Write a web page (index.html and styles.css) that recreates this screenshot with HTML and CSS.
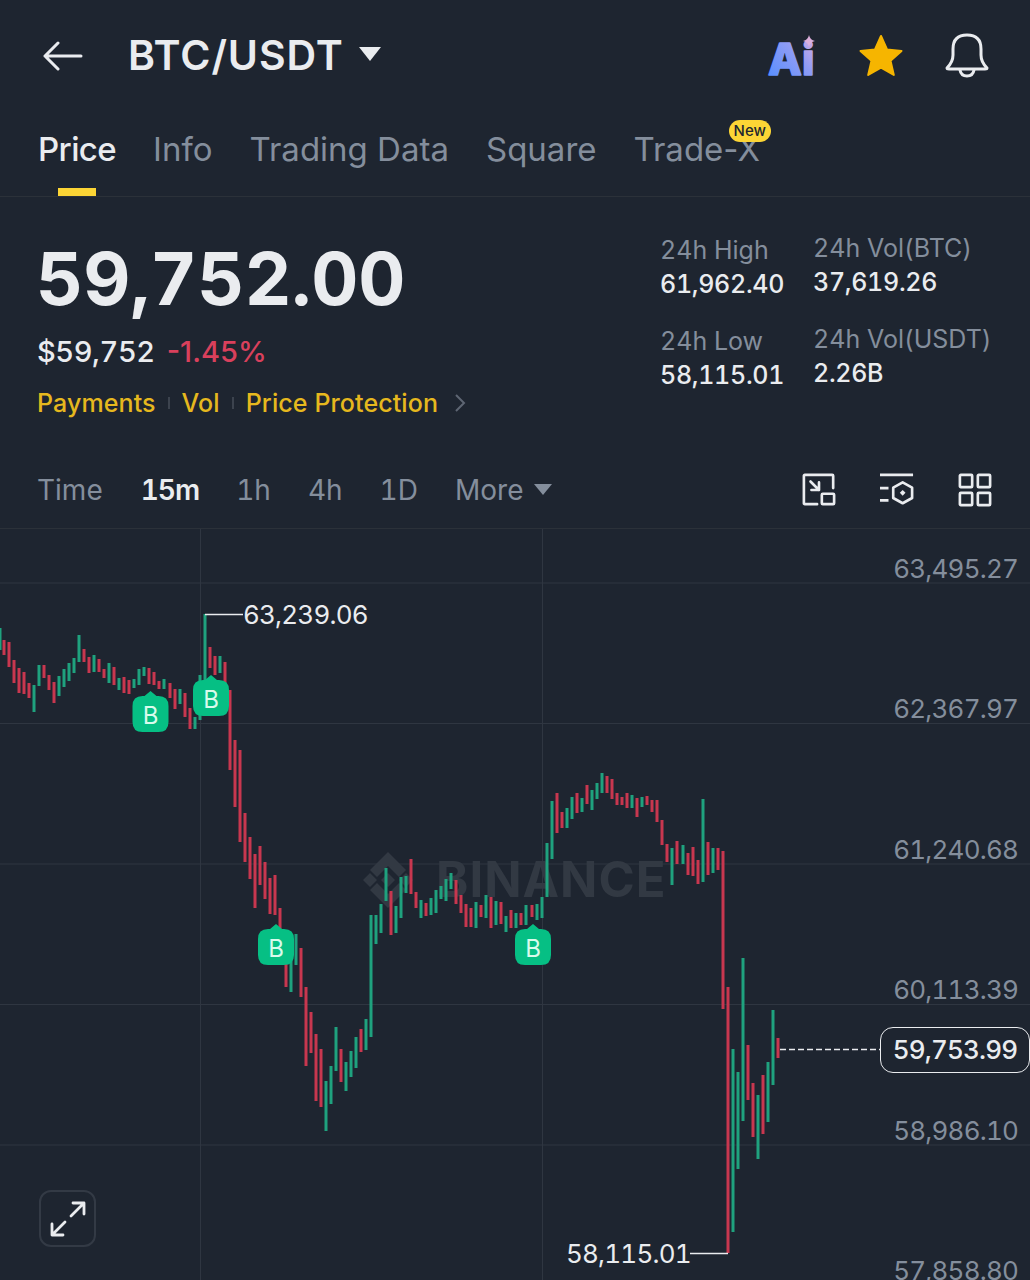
FILE: index.html
```html
<!DOCTYPE HTML>
<html lang="en">
  <head>
    <meta charset="utf-8">
    <title>BTC/USDT</title>
    <link rel="stylesheet" href="styles.css">
  </head>
  <body>
    <div class="app">
      <header class="topbar">
        <svg class="back" width="40" height="32" viewBox="0 0 40 32" fill="none" stroke="#eaecef" stroke-width="3" stroke-linecap="round" stroke-linejoin="round"><path d="M2 16H38M15 3L2 16L15 29"/></svg>
        <h1 class="pair">BTC/USDT</h1>
        <span class="caret caret-big"></span>
        <div class="top-icons">
          <svg class="ai" width="56" height="60" viewBox="0 0 56 60">
            <defs>
              <linearGradient id="aiGrad" x1="0" y1="1" x2="1" y2="0">
                <stop offset="0" stop-color="#4f8dff"/>
                <stop offset="0.6" stop-color="#8f9cf5"/>
                <stop offset="1" stop-color="#e3b0e0"/>
              </linearGradient>
            </defs>
            <text x="1" y="49" class="ai-text" fill="url(#aiGrad)" stroke="url(#aiGrad)">Ai</text>
            <path d="M42 9Q43 14 48 15Q43 16 42 21Q41 16 36 15Q41 14 42 9Z" fill="#dcb0dc"/>
          </svg>
          <svg class="star" width="46" height="44" viewBox="0 0 46 44"><path d="M23 2L29 15.5L43.5 17L32.5 26.8L35.8 41L23 33.6L10.2 41L13.5 26.8L2.500 17L17 15.500Z" fill="#f6b500" stroke="#f6b500" stroke-width="2" stroke-linejoin="round"/></svg>
          <svg class="bell" width="44" height="46" viewBox="0 0 44 46" fill="none" stroke="#eaecef" stroke-width="3" stroke-linecap="round" stroke-linejoin="round"><path d="M2 35Q8 29 8 22V16Q8 2 22 2Q36 2 36 16V22Q36 29 42 35Q42 36 40 36H4Q2 36 2 35Z"/><path d="M15 37Q16 43 22 43Q28 43 29 37"/></svg>
        </div>
      </header>

      <nav class="tabs">
        <a class="tab active">Price</a>
        <a class="tab">Info</a>
        <a class="tab">Trading Data</a>
        <a class="tab">Square</a>
        <a class="tab tab-new">Trade-X<span class="new">New</span></a>
      </nav>

      <section class="summary">
        <div class="quote">
          <div class="last">59,752.00</div>
          <div class="sub"><span class="usd">$59,752</span><span class="change">-1.45%</span></div>
          <div class="links">
            <span>Payments</span><i></i><span>Vol</span><i></i><span>Price Protection</span>
            <svg width="12" height="20" viewBox="0 0 12 20" fill="none" stroke="#5e6673" stroke-width="2"><path d="M2 2L10 10L2 18"/></svg>
          </div>
        </div>
        <div class="stats">
          <div class="stat"><label>24h High</label><b>61,962.40</b></div>
          <div class="stat stat-r"><label>24h Vol(BTC)</label><b>37,619.26</b></div>
          <div class="stat"><label>24h Low</label><b>58,115.01</b></div>
          <div class="stat stat-r"><label>24h Vol(USDT)</label><b>2.26B</b></div>
        </div>
      </section>

      <div class="intervals">
        <span class="iv iv-time">Time</span>
        <span class="iv iv-on">15m</span>
        <span class="iv">1h</span>
        <span class="iv">4h</span>
        <span class="iv">1D</span>
        <span class="iv iv-more">More<span class="caret caret-gray"></span></span>
        <div class="tools">
          <svg width="34" height="34" viewBox="0 0 36 36" fill="none" stroke="#eaecef" stroke-width="2.800" stroke-linejoin="round" stroke-linecap="round"><path d="M16 33H3Q2 33 2 32V3Q2 2 3 2H32Q33 2 33 3V16"/><path d="M9 9L18 18M18 10V18H10"/><rect x="21" y="22" width="13" height="11" rx="1"/></svg>
          <svg width="36" height="34" viewBox="0 0 38 36" fill="none" stroke="#eaecef" stroke-width="2.800" stroke-linejoin="round"><path d="M1 2H36M1 16H10M1 29H10"/><path d="M25 10L35 15.500V26.500L25 32L15 26.500V15.500Z"/><path d="M25 18L28 21L25 24L22 21Z" fill="#eaecef" stroke="none"/></svg>
          <svg width="34" height="34" viewBox="0 0 36 36" fill="none" stroke="#eaecef" stroke-width="2.800" stroke-linejoin="round"><rect x="2" y="2" width="13" height="13" rx="1"/><rect x="21" y="2" width="13" height="13" rx="1"/><rect x="2" y="21" width="13" height="13" rx="1"/><rect x="21" y="21" width="13" height="13" rx="1"/></svg>
        </div>
      </div>

      <section class="chart">
        <svg class="plot" width="1030" height="751" viewBox="0 529 1030 751">
          <!-- grid -->
          <path class="grid" d="M0 583H1030M0 723.500H1030M0 864H1030M0 1004.500H1030M0 1145H1030M200.500 529V1280M542.500 529V1280"/>
          <!-- watermark -->
          <g class="mark">
            <path d="M388 852L406 870L399 877L388 866L377 877L370 870ZM388 908L406 890L399 883L388 894L377 883L370 890ZM388 873L395 880L388 887L381 880ZM370 873L377 880L370 887L363 880ZM406 873L413 880L406 887L399 880Z"/>
            <text x="436" y="897" class="mark-text">BINANCE</text>
          </g>
          <!-- candles -->
          <path class="red" d="M4 640V655M9 642V667M14 660V683M19 668V693M24 672V694M29 683V698M44 665V678M49 675V690M54 682V703M84 649V662M89 657V673M99 659V672M104 669V678M114 667V685M124 677V693M129 680V694M149 668V684M154 672V685M159 681V689M170 683V698M175 689V709M185 693V717M190 708V729M210 647V668M215 656V675M225 662V683M230 690V770M235 740V807M240 750V842M245 813V862M250 837V879M255 854V908M260 846V885M265 862V899M270 878V914M275 875V915M280 908V933M286 930V987M301 948V997M306 987V1066M311 1012V1053M316 1034V1101M321 1049V1107M341 1049V1082M361 1029V1052M391 891V935M411 859V894M416 892V908M426 903V916M456 880V904M461 895V913M466 904V927M471 908V927M481 905V917M491 897V928M501 902V924M511 910V928M521 913V925M532 905V917M557 793V833M562 812V828M577 793V813M587 785V804M607 776V793M612 779V799M617 793V805M622 797V805M627 793V808M637 798V817M647 796V805M652 800V812M657 800V822M662 820V845M667 844V862M677 841V864M688 853V875M693 847V876M698 860V884M708 842V875M718 848V870M723 851V1009M728 987V1253M748 1045V1100M753 1083V1137M763 1075V1134M778 1038V1058"/>
          <path class="green" d="M0 628V650M34 685V712M39 665V686M59 676V696M64 669V687M69 663V681M74 658V673M79 635V662M94 655V672M109 663V683M119 678V690M134 679V688M139 669V685M144 667V676M164 679V689M180 689V704M195 717V729M200 675V720M205 614V680M220 656V673M291 935V992M296 934V965M326 1081V1131M331 1066V1104M336 1027V1071M346 1062V1091M351 1051V1077M356 1037V1068M366 1019V1050M371 915V1037M376 915V944M381 904V933M386 868V901M396 906V933M401 877V918M406 876V893M421 900V918M431 898V915M436 890V913M441 886V899M446 879V901M451 873V889M476 902V928M486 895V918M496 901V925M506 916V932M516 913V928M526 905V925M537 904V920M542 897V918M547 843V897M552 801V859M567 808V828M572 797V819M582 798V812M592 790V810M597 783V799M602 773V793M632 795V808M642 797V807M672 848V885M683 845V864M703 799V882M713 848V873M733 1049V1232M738 1072V1169M743 958V1121M758 1095V1159M768 1062V1122M773 1010V1085"/>
          <!-- high / low leaders -->
          <path class="leader" d="M205 614.500H243M690 1253.500H728"/>
          <path class="dash" d="M780 1049.500H880"/>
          <!-- buy markers -->
          <g class="buy">
            <g transform="translate(150.500 691)"><path d="M0 0L6 5H8Q18 5 18 15V31Q18 41 8 41H-8Q-18 41 -18 31V15Q-18 5 -8 5H-6Z"/><text y="33">B</text></g>
            <g transform="translate(211 675)"><path d="M0 0L6 5H8Q18 5 18 15V31Q18 41 8 41H-8Q-18 41 -18 31V15Q-18 5 -8 5H-6Z"/><text y="33">B</text></g>
            <g transform="translate(276 924)"><path d="M0 0L6 5H8Q18 5 18 15V31Q18 41 8 41H-8Q-18 41 -18 31V15Q-18 5 -8 5H-6Z"/><text y="33">B</text></g>
            <g transform="translate(533 924)"><path d="M0 0L6 5H8Q18 5 18 15V31Q18 41 8 41H-8Q-18 41 -18 31V15Q-18 5 -8 5H-6Z"/><text y="33">B</text></g>
          </g>
        </svg>

        <div class="axis">
          <span>63,495.27</span>
          <span>62,367.97</span>
          <span>61,240.68</span>
          <span>60,113.39</span>
          <span>58,986.10</span>
          <span>57,858.80</span>
        </div>
        <span class="tag-high">63,239.06</span>
        <span class="tag-low">58,115.01</span>
        <span class="tag-now">59,753.99</span>
        <div class="expand">
          <svg width="36" height="36" viewBox="0 0 36 36" fill="none" stroke="#eaecef" stroke-width="2.800" stroke-linecap="round" stroke-linejoin="round"><path d="M21 15L34 2M23 2H34V13M15 21L2 34M2 23V34H13"/></svg>
        </div>
      </section>
    </div>
  </body>
</html>
```

FILE: styles.css
```css
html {
  font-size: 100%;
  font-family: Inter, "Liberation Sans", sans-serif;
  font-variant-numeric: tabular-nums; }

* {
  margin: 0;
  padding: 0;
  box-sizing: border-box; }

body {
  background: #1e2530;
  color: #eaecef;
  width: 1030px;
  height: 1280px;
  overflow: hidden; }

.app {
  width: 1030px;
  height: 1280px;
  display: flex;
  flex-direction: column; }

/* top bar */
.topbar {
  height: 112px;
  display: flex;
  align-items: center;
  padding: 0 41px 0 43px; }

.back {
  margin-right: 45px; }

.pair {
  font-size: 41px;
  font-weight: 600;
  letter-spacing: 0.9px;
  line-height: 1;
  margin-top: -2px;
  font-variant-numeric: normal; }

.caret {
  display: inline-block;
  width: 0;
  height: 0;
  border-left: 11px solid transparent;
  border-right: 11px solid transparent;
  border-top: 14px solid #eaecef; }

.caret-big {
  margin-left: 15px;
  margin-top: -4px; }

.caret-gray {
  border-left-width: 9px;
  border-right-width: 9px;
  border-top: 11px solid #848e9c;
  margin-left: 11px;
  vertical-align: 5px; }

.top-icons {
  margin-left: auto;
  display: flex;
  align-items: center;
  gap: 41px; }

.ai {
  margin-right: -6px; }

.ai-text {
  font-size: 44px;
  font-weight: 800;
  stroke-width: 1.5;
  stroke-linejoin: round; }

/* tabs */
.tabs {
  height: 85px;
  display: flex;
  gap: 37px;
  padding: 0 0 0 38px;
  border-bottom: 1px solid #2b3139;
  font-variant-numeric: normal; }

.tab {
  position: relative;
  font-size: 33px;
  font-weight: 400;
  line-height: 74px;
  color: #848e9c; }

.active {
  color: #eaecef;
  font-weight: 500;
  letter-spacing: -0.6px; }

.active:after {
  content: "";
  position: absolute;
  left: 20px;
  bottom: 0;
  width: 38px;
  height: 8px;
  background: #fcd535; }

.new {
  position: absolute;
  top: 8px;
  right: -11px;
  height: 22px;
  padding: 0 5px;
  border-radius: 11px;
  background: #fcd535;
  color: #202630;
  font-size: 15px;
  font-weight: 500;
  line-height: 22px; }

/* price summary */
.summary {
  height: 252px;
  display: flex;
  justify-content: space-between;
  padding: 0 39px 0 38px; }

.last {
  font-size: 73px;
  font-weight: 700;
  line-height: 80px;
  margin-top: 42px;
  margin-left: -2px; }

.sub {
  display: flex;
  gap: 12px;
  margin-top: 16px;
  margin-left: -1px;
  font-size: 29px;
  font-weight: 500;
  line-height: 34px; }

.usd {
  letter-spacing: -0.4px; }

.change {
  color: #d9405c;
  font-variant-numeric: normal; }

.links {
  display: flex;
  align-items: center;
  margin-top: 17px;
  margin-left: -1px;
  font-size: 25px;
  font-weight: 500;
  line-height: 34px;
  letter-spacing: 0.1px;
  color: #e6b81e; }

.links i {
  width: 2px;
  height: 12px;
  margin: 0 12px;
  background: #3c434e; }

.links svg {
  margin-left: 16px; }

.stats {
  display: grid;
  grid-template-columns: 153px 178px;
  row-gap: 23px;
  margin-top: 36px;
  align-content: start; }

.stat label {
  display: block;
  font-size: 25px;
  line-height: 34px;
  color: #848e9c;
  white-space: nowrap; }

.stat b {
  display: block;
  font-size: 25px;
  font-weight: 500;
  line-height: 34px;
  letter-spacing: -0.3px; }

.stat-r {
  margin-top: -2px; }

/* interval row */
.intervals {
  height: 80px;
  display: flex;
  align-items: center;
  padding: 2px 38px 0;
  border-bottom: 1px solid #2b3139;
  font-size: 28px;
  color: #848e9c; }

.iv {
  margin-right: 37px; }

.iv-time {
  margin-left: -1px;
  margin-right: 38px; }

.iv-on {
  color: #eaecef;
  font-weight: 600;
  letter-spacing: -1px; }

.tools {
  margin-left: auto;
  display: flex;
  gap: 43px;
  align-items: center; }

/* chart */
.chart {
  position: relative;
  flex: 1;
  overflow: hidden; }

.plot {
  display: block; }

.grid {
  stroke: #2f3641;
  stroke-width: 1;
  fill: none; }

.mark {
  fill: #323943; }

.mark-text {
  font-size: 49px;
  font-weight: 700;
  letter-spacing: 1px; }

.red, .green {
  fill: none;
  stroke-width: 3; }

.red {
  stroke: #c8374f; }

.green {
  stroke: #1fa27e; }

.leader {
  stroke: #eaecef;
  stroke-width: 1.500;
  fill: none; }

.dash {
  stroke: #eaecef;
  stroke-width: 1.500;
  stroke-dasharray: 6 3;
  fill: none; }

.buy path {
  fill: #06bf84; }

.buy text {
  fill: #d8fbec;
  font-size: 24px;
  text-anchor: middle; }

.axis {
  position: absolute;
  top: 23px;
  right: 12px;
  height: 736px;
  display: flex;
  flex-direction: column;
  justify-content: space-between;
  align-items: flex-end;
  font-size: 26px;
  line-height: 34px;
  letter-spacing: -0.8px;
  color: #848e9c; }

.tag-high, .tag-low {
  position: absolute;
  font-size: 26px;
  line-height: 34px;
  letter-spacing: -0.8px;
  color: #eaecef; }

.tag-high {
  left: 243px;
  top: 69px; }

.tag-low {
  left: 566px;
  top: 708px; }

.tag-now {
  position: absolute;
  left: 880px;
  top: 498px;
  width: 150px;
  height: 46px;
  border: 1.500px solid #eaecef;
  border-radius: 13px;
  background: #1e2530;
  color: #eaecef;
  font-size: 26px;
  font-weight: 500;
  line-height: 44px;
  letter-spacing: -0.8px;
  text-align: center; }

.expand {
  position: absolute;
  left: 39px;
  top: 661px;
  width: 57px;
  height: 57px;
  border: 2px solid #333a45;
  border-radius: 12px;
  display: flex;
  align-items: center;
  justify-content: center; }
```
